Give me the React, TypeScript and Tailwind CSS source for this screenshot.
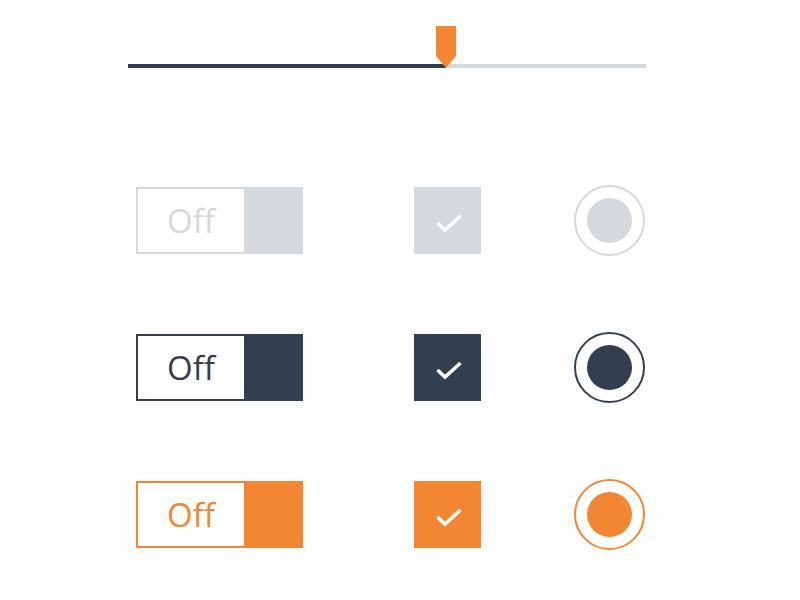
const variants = [
  { color: "text-[#d5d8dc]", border: "border-[#d5d8dc]", fill: "bg-[#d5d8dc]" },
  { color: "text-[#333f50]", border: "border-[#333f50]", fill: "bg-[#333f50]" },
  { color: "text-[#f28632]", border: "border-[#f28632]", fill: "bg-[#f28632]" },
];

type Variant = (typeof variants)[number];

const Toggle = ({ v }: { v: Variant }) => (
  <div className={`flex h-[67px] w-[167px] border-2 bg-white ${v.border}`}>
    <div className={`flex flex-1 items-center justify-center text-[33px] leading-none ${v.color}`}>
      <span>Off</span>
    </div>
    <div className={`w-[57px] ${v.fill}`} />
  </div>
);

const Checkbox = ({ v }: { v: Variant }) => (
  <div className={`flex h-[67px] w-[67px] items-center justify-center ${v.fill}`}>
    <svg width="28" height="20" viewBox="0 0 28 20" className="mt-[4px] ml-[2px]">
      <path d="M2.5 10 L10 17 L25.5 3" fill="none" stroke="white" strokeWidth="3.5" />
    </svg>
  </div>
);

const Radio = ({ v }: { v: Variant }) => (
  <div className={`flex h-[71px] w-[71px] items-center justify-center rounded-full border-2 bg-white ${v.border}`}>
    <div className={`h-[45px] w-[45px] rounded-full ${v.fill}`} />
  </div>
);

const App = () => {
  return (
    <div className="h-[600px] w-[800px] bg-[#fdfdfd] font-['Open_Sans',sans-serif]">
      <div className="pt-[64px] pl-[128px]">
        <div className="relative flex h-[4px] w-[518px]">
          <div className="w-[318px] bg-[#333f50]" />
          <div className="flex-1 bg-[#d5d8dc]" />
          <svg
            width="20"
            height="42"
            viewBox="0 0 20 42"
            className="absolute bottom-0 left-[308px]"
          >
            <polygon points="0,0 20,0 20,30 10,42 0,30" fill="#f28632" />
          </svg>
        </div>
      </div>

      <div className="mt-[117px] flex flex-col gap-[76px] pl-[136px]">
        {variants.map((v, i) => (
          <div key={i} className="flex items-center">
            <Toggle v={v} />
            <div className="ml-[111px]">
              <Checkbox v={v} />
            </div>
            <div className="ml-[93px]">
              <Radio v={v} />
            </div>
          </div>
        ))}
      </div>
    </div>
  );
};

export default App;
